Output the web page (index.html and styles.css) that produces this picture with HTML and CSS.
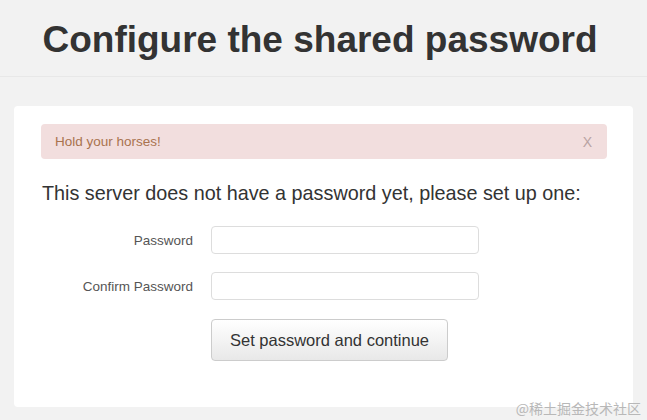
FILE: index.html
```html
<!DOCTYPE html>
<html lang="en">
<head>
    <meta charset="UTF-8">
    <meta name="viewport" content="width=device-width, initial-scale=1.0">
    <title>Configure the shared password</title>
    <link rel="stylesheet" href="styles.css">
</head>
<body>

<div class="page-header">
    <h1>Configure the shared password</h1>
</div>

<div class="panel">
    <div class="alert">
        <span>Hold your horses!</span>
        <span class="alert-close">X</span>
    </div>

    <p class="lead">This server does not have a password yet, please set up one:</p>

    <form class="form">
        <div class="form-row">
            <label for="password">Password</label>
            <input type="password" id="password">
        </div>
        <div class="form-row">
            <label for="confirmPassword">Confirm Password</label>
            <input type="password" id="confirmPassword">
        </div>
        <div class="form-row">
            <span class="spacer"></span>
            <button type="button">Set password and continue</button>
        </div>
    </form>
</div>

<div class="watermark">@稀土掘金技术社区</div>

</body>
</html>
```

FILE: styles.css
```css
body {
    font-family: "Liberation Sans", Arial, sans-serif;
    margin: 0;
    background-color: #f2f2f2;
    color: #333;
    height: 420px;
    overflow: hidden;
}
.page-header {
    height: 77px;
    border-bottom: 1px solid #e8e8e8;
    box-sizing: border-box;
    padding: 17px 7px 0 0;
}
h1 {
    margin: 0;
    text-align: center;
    font-size: 37px;
    line-height: 46px;
    font-weight: bold;
    color: #333;
}
.panel {
    margin: 29px 14px 0 14px;
    height: 301px;
    box-sizing: border-box;
    background: #fff;
    border-radius: 4px;
    padding: 18px 26px 0 27px;
}
.alert {
    display: flex;
    justify-content: space-between;
    align-items: center;
    height: 35px;
    box-sizing: border-box;
    padding: 0 14px;
    background-color: #f2dede;
    border-radius: 4px;
    color: #a9734e;
    font-size: 13.5px;
}
.alert-close {
    color: #b9a3a3;
    font-size: 14px;
    margin-right: 1px;
}
.lead {
    margin: 20px 0 0 1px;
    font-size: 19.8px;
    line-height: 28px;
    color: #333;
}
.form {
    margin-top: 19px;
}
.form-row {
    display: flex;
    align-items: center;
    margin-bottom: 18px;
}
label, .spacer {
    display: block;
    width: 152px;
    text-align: right;
    padding-right: 18px;
    font-size: 13.5px;
    color: #555;
    flex-shrink: 0;
}
input {
    width: 268px;
    height: 28px;
    box-sizing: border-box;
    border: 1px solid #ddd;
    border-radius: 4px;
    background: #fff;
    padding: 4px 8px;
}
button {
    width: 237px;
    height: 42px;
    margin-top: 1px;
    border: 1px solid #ccc;
    border-radius: 4px;
    background: linear-gradient(#fff, #e8e8e8);
    font-family: inherit;
    font-size: 16.5px;
    color: #333;
    cursor: pointer;
}
.watermark {
    position: absolute;
    right: 6px;
    bottom: 2px;
    font-family: "Noto Sans CJK SC", serif;
    font-size: 14px;
    color: #b8b8b8;
}
```
